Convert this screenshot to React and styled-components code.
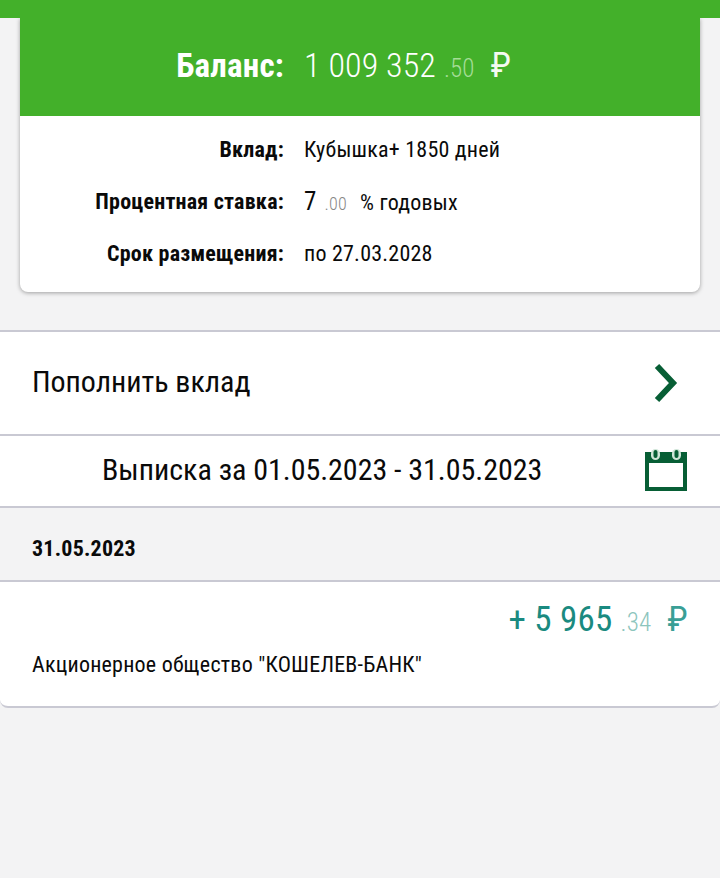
import React from "react";
import styled, { createGlobalStyle } from "styled-components";

const Global = createGlobalStyle`
  html, body { margin: 0; padding: 0; background: #f3f3f4; }
  body { font-family: "Roboto", "Liberation Sans", sans-serif; font-stretch: 75%; }
`;
const Page = styled.div`
  width: 720px; height: 878px; overflow: hidden; background: #f3f3f4;
  display: flex; flex-direction: column;
`;
const TopBar = styled.div`height: 18px; background: #43b02a; flex: none; position: relative; z-index: 1;`;
const Card = styled.section`
  margin: 0 20px; height: 274px; flex: none; background: #fff; border-radius: 0 0 8px 8px;
  box-shadow: 0 1px 4px rgba(0,0,0,.35); overflow: hidden; display: flex; flex-direction: column;
`;
const Balance = styled.div`
  height: 98px; padding-bottom: 3px; box-sizing: border-box; background: #43b02a; color: #fff; display: grid; grid-template-columns: 264px 1fr; column-gap: 20px; align-items: center;
`;
const BalanceLabel = styled.div`text-align: right; font-size: 33px; font-weight: 700; letter-spacing: .2px; white-space: nowrap;`;
const BalanceValue = styled.div`font-size: 34px; font-weight: 300; letter-spacing: .1px; white-space: nowrap; display: flex; align-items: baseline;`;
const Cents = styled.span`font-size: ${p => p.$s}px; color: ${p => p.$c}; font-weight: 300; margin-left: ${p => p.$l}px; margin-right: ${p => p.$r}px;`;
const Currency = styled.span`color: ${p => p.$c}; font-size: 35px; font-weight: 400;`;
const Details = styled.div`padding: 7px 0; display: flex; flex-direction: column;`;
const Row = styled.div`height: 52px; display: grid; grid-template-columns: 264px 1fr; column-gap: 20px; align-items: center; font-size: 22px; letter-spacing: .22px; color: #0a0a0a;`;
const Label = styled.div`text-align: right; font-weight: 700; white-space: nowrap;`;
const Value = styled.div`white-space: nowrap; display: flex; align-items: baseline;`;
const Big = styled.span`font-size: 25px;`;
const ActionRow = styled.div`
  margin-top: 38px; height: 102px; flex: none; background: #fff; border-top: 2px solid #c9c9d3; border-bottom: 2px solid #c9c9d3;
  display: flex; align-items: center; justify-content: space-between; padding: 0 40px 0 32px; font-size: 30px; letter-spacing: -.03px; color: #0a0a0a;
`;
const ActionTitle = styled.span`margin-bottom: 4px;`;
const StatementRow = styled.div`
  height: 70px; flex: none; background: #fff; border-bottom: 2px solid #c9c9d3;
  display: flex; align-items: center; justify-content: space-between; padding: 0 33px 0 102px; font-size: 30px; letter-spacing: -.03px; color: #0a0a0a;
`;
const StatementTitle = styled.span`margin-bottom: 3px;`;
const CalendarSlot = styled.span`display: flex; margin-bottom: 2px;`;
const DateHead = styled.div`
  height: 72px; flex: none; display: flex; align-items: center; padding-left: 32px; font-size: 22px; font-weight: 700; letter-spacing: .22px; color: #0a0a0a;
  border-bottom: 2px solid #c9c9d3; border-radius: 8px 8px 0 0;
`;
const DateText = styled.span`margin-top: 8px;`;
const Tx = styled.div`
  height: 124px; flex: none; background: #fff; border-bottom: 2px solid #c9c9d3; border-radius: 0 0 8px 8px;
  display: flex; flex-direction: column; padding: 0 32px;
`;
const Amount = styled.div`
  margin-top: 17px; height: 42px; display: flex; justify-content: flex-end; align-items: baseline; color: #1a8a80; font-size: 35px; letter-spacing: .2px; white-space: nowrap;
`;
const Payer = styled.div`margin-top: 11px; font-size: 22px; letter-spacing: .22px; color: #0a0a0a; white-space: nowrap;`;

const Chevron = () => (
  <svg width="26" height="40" viewBox="0 0 26 40"><path d="M3 3 L19 20 L3 37" fill="none" stroke="#075e35" strokeWidth="6"/></svg>
);
const Calendar = () => (
  <svg width="42" height="42" viewBox="0 0 42 42">
    <path d="M0 3h42v39H0z" fill="#075e35"/>
    <path d="M4 14h34v24H4z" fill="#fff"/>
    <rect x="6" y="0" width="9" height="11" rx="4.5" fill="#cfe5d8"/>
    <rect x="27" y="0" width="9" height="11" rx="4.5" fill="#cfe5d8"/>
    <rect x="8.5" y="1" width="4" height="8" rx="2" fill="#075e35"/>
    <rect x="29.5" y="1" width="4" height="8" rx="2" fill="#075e35"/>
  </svg>
);

export default function App() {
  return (
    <Page>
      <Global />
      <TopBar />
      <Card>
        <Balance>
          <BalanceLabel>Баланс:</BalanceLabel>
          <BalanceValue>1 009 352<Cents $s={25} $c="#a5dd97" $l={8} $r={16}>.50</Cents><Currency $c="#f4faf1">₽</Currency></BalanceValue>
        </Balance>
        <Details>
          <Row><Label>Вклад:</Label><Value>Кубышка+ 1850 дней</Value></Row>
          <Row><Label>Процентная ставка:</Label><Value><Big>7</Big><Cents $s={18} $c="#888" $l={8} $r={13}>.00</Cents>% годовых</Value></Row>
          <Row><Label>Срок размещения:</Label><Value>по 27.03.2028</Value></Row>
        </Details>
      </Card>
      <ActionRow><ActionTitle>Пополнить вклад</ActionTitle><Chevron /></ActionRow>
      <StatementRow><StatementTitle>Выписка за 01.05.2023 - 31.05.2023</StatementTitle><CalendarSlot><Calendar /></CalendarSlot></StatementRow>
      <DateHead><DateText>31.05.2023</DateText></DateHead>
      <Tx>
        <Amount>+ 5 965<Cents $s={25} $c="#8cc5bd" $l={8} $r={16}>.34</Cents><Currency $c="#3a9f96">₽</Currency></Amount>
        <Payer>Акционерное общество "КОШЕЛЕВ-БАНК"</Payer>
      </Tx>
    </Page>
  );
}
